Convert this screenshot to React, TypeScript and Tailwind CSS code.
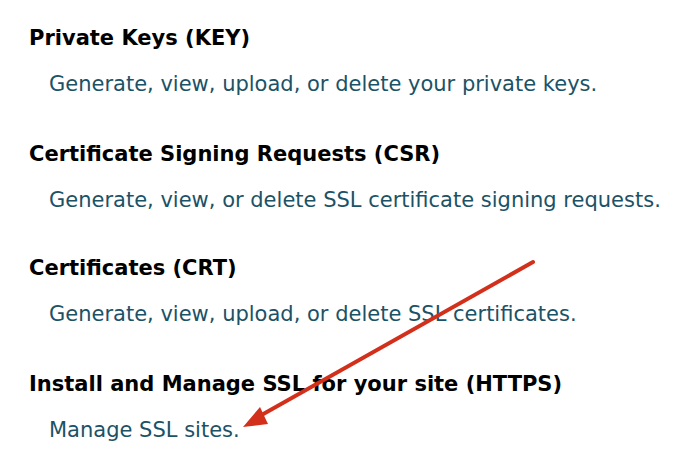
import React from "react";

const sections = [
  { title: "Private Keys (KEY)", desc: "Generate, view, upload, or delete your private keys.", mt: "mt-0" },
  { title: "Certificate Signing Requests (CSR)", desc: "Generate, view, or delete SSL certificate signing requests.", mt: "mt-[44px]" },
  { title: "Certificates (CRT)", desc: "Generate, view, upload, or delete SSL certificates.", mt: "mt-[42px]" },
  { title: "Install and Manage SSL for your site (HTTPS)", desc: "Manage SSL sites.", mt: "mt-[44px]" },
];

export default function App() {
  return (
    <div className="relative w-[700px] h-[467px] bg-white overflow-hidden" style={{ fontFamily: '"DejaVu Sans", Verdana, sans-serif' }}>
      <div className="flex flex-col pt-[25px] pl-[29px]">
        {sections.map((s) => (
          <div key={s.title} className={`flex flex-col gap-[20px] ${s.mt}`}>
            <div className="text-[21px] leading-[26px] font-bold text-black whitespace-nowrap">{s.title}</div>
            <div className="pl-[20px] text-[21px] leading-[26px] text-[#1b5266] whitespace-nowrap">{s.desc}</div>
          </div>
        ))}
      </div>
      <svg className="absolute left-0 top-0" width="700" height="467" viewBox="0 0 700 467">
        <line x1="533" y1="262" x2="258" y2="417" stroke="#d3301c" strokeWidth="4" strokeLinecap="round" />
        <polygon points="243,427 260,407 268,424" fill="#d3301c" />
      </svg>
    </div>
  );
}
